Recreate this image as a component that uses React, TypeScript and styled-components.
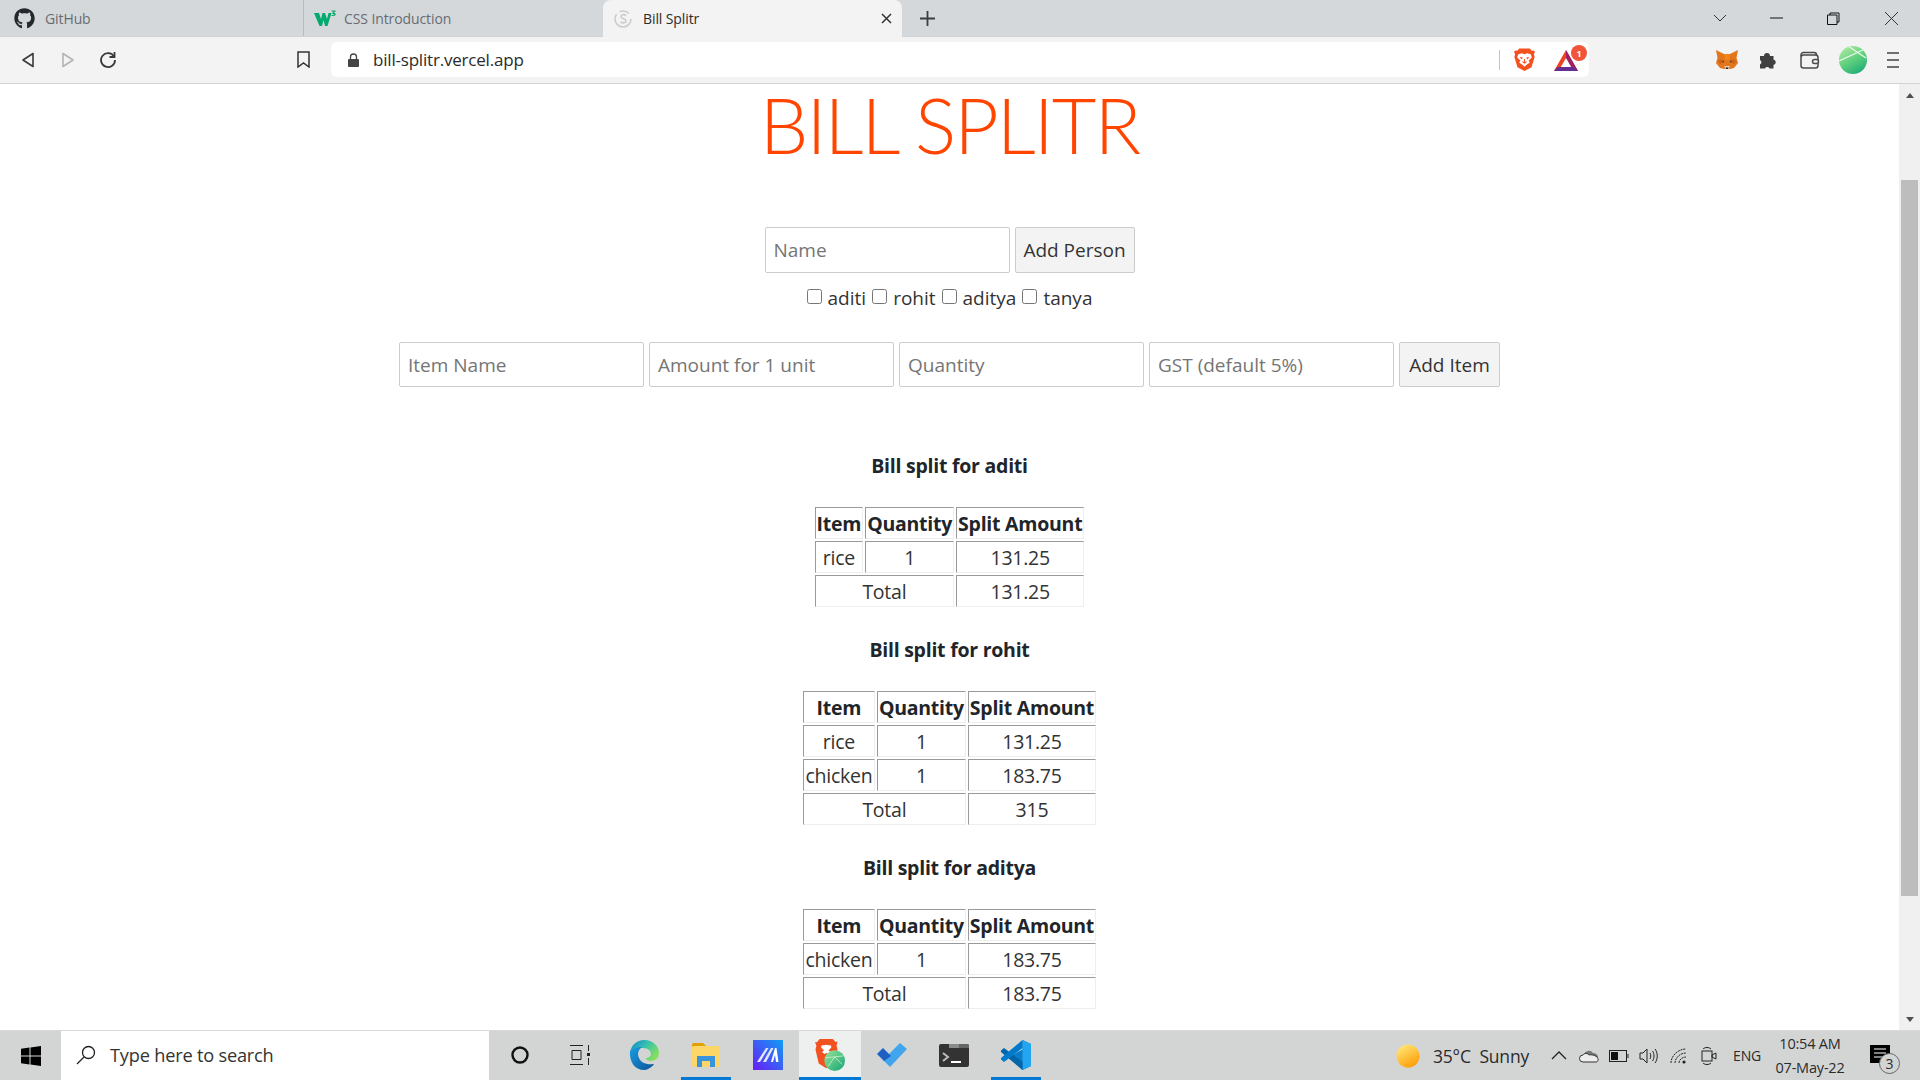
import React from 'react';
import styled, { createGlobalStyle } from 'styled-components';
import { FaGithub } from 'react-icons/fa';

const GlobalStyle = createGlobalStyle`
  html, body { margin: 0; padding: 0; height: 100%; overflow: hidden; background: #fff; }
  body { font-family: 'Open Sans', 'Liberation Sans', sans-serif; color: #212529; }
  #root { height: 100%; }
`;

const Screen = styled.div`
  width: 1920px;
  height: 1080px;
  display: flex;
  flex-direction: column;
  overflow: hidden;
`;

/* ---- tab strip ---- */
const TabStrip = styled.div`
  height: 36px;
  flex: none;
  display: flex;
  align-items: stretch;
  background: #d5d8db;
  border-bottom: 1px solid #cfd2d5;
  box-sizing: content-box;
`;

const Tab = styled.div<{ $active?: boolean; $width: number; $divider?: boolean; $inset: number; $gap: number }>`
  width: ${p => p.$width}px;
  flex: none;
  box-sizing: border-box;
  display: flex;
  align-items: center;
  gap: ${p => p.$gap}px;
  padding: 0 10px 0 ${p => p.$inset}px;
  font-size: 14px;
  letter-spacing: -0.1px;
  color: ${p => (p.$active ? '#2a2c2e' : '#686c70')};
  background: ${p => (p.$active ? '#f3f3f3' : 'transparent')};
  border-radius: ${p => (p.$active ? '8px 8px 0 0' : '0')};
  border-right: ${p => (p.$divider ? '1px solid #b9bcbf' : '0')};
  margin-bottom: ${p => (p.$active ? '-1px' : '0')};
`;

const TabTitle = styled.span`
  flex: 1;
  white-space: nowrap;
`;

const NewTab = styled.div`
  width: 50px;
  display: flex;
  align-items: center;
  justify-content: center;
`;

const WindowControls = styled.div`
  margin-left: auto;
  display: flex;
  align-items: center;
`;

const WindowButton = styled.div<{ $width?: number }>`
  width: ${p => p.$width ?? 57}px;
  height: 36px;
  display: flex;
  align-items: center;
  justify-content: center;
`;

/* ---- address toolbar ---- */
const Toolbar = styled.div`
  height: 47px;
  flex: none;
  box-sizing: border-box;
  display: flex;
  align-items: center;
  padding-left: 8px;
  padding-bottom: 1px;
  background: #f3f3f3;
  border-bottom: 1px solid #d4d4d4;
`;

const ToolSlot = styled.div<{ $width?: number; $offset?: number }>`
  width: ${p => p.$width ?? 40}px;
  margin-left: ${p => p.$offset ?? 0}px;
  height: 35px;
  flex: none;
  display: flex;
  align-items: center;
  justify-content: center;
`;

const AddressBar = styled.div`
  width: 1258px;
  height: 35px;
  flex: none;
  margin-left: 8px;
  background: #fff;
  border-radius: 6px;
  display: flex;
  align-items: center;
  padding-left: 17px;
  box-sizing: border-box;
`;

const Url = styled.span`
  margin-left: 14px;
  font-size: 17px;
  letter-spacing: -0.2px;
  color: #2b2b2b;
`;

const AddressEnd = styled.div`
  margin-left: auto;
  display: flex;
  align-items: center;
  height: 100%;
`;

const AddressDivider = styled.div`
  width: 1px;
  height: 20px;
  background: #c4c4c4;
  margin-right: 14px;
`;

const BatWrap = styled.div`
  position: relative;
  width: 24px;
  height: 21px;
  margin: 2px 11px 0 19px;
`;

const BatBadge = styled.div`
  position: absolute;
  top: -5px;
  right: -9px;
  width: 16px;
  height: 16px;
  border-radius: 50%;
  background: #f0553a;
  color: #fff;
  font-size: 9px;
  font-weight: 700;
  display: flex;
  align-items: center;
  justify-content: center;
`;

const Avatar = styled.div`
  width: 28px;
  height: 28px;
  border-radius: 50%;
  background: linear-gradient(150deg, #a8e8a0 10%, #5fcf7d 50%, #16a877 95%);
  overflow: hidden;
`;

/* ---- page ---- */
const Viewport = styled.div`
  flex: 1;
  min-height: 0;
  display: flex;
`;

const Page = styled.main`
  flex: 1;
  min-width: 0;
  display: flex;
  flex-direction: column;
  align-items: center;
  background: #fff;
`;

const Title = styled.h1`
  margin: 0;
  height: 143px;
  flex: none;
  font-family: Lato, 'Open Sans', sans-serif;
  font-size: 77px;
  font-weight: 300;
  line-height: 80px;
  letter-spacing: -2px;
  color: #ff4500;
  white-space: nowrap;
`;

const FormRow = styled.div<{ $height: number }>`
  display: flex;
  gap: 5px;
  height: ${p => p.$height}px;
  flex: none;
`;

const Field = styled.input`
  width: 245px;
  height: 100%;
  box-sizing: border-box;
  padding: 0 8px;
  border: 1px solid #ccc;
  border-radius: 2px;
  background: #fff;
  font: 400 19px 'Open Sans', sans-serif;
  color: #333;
  &::placeholder { color: #757575; opacity: 1; }
`;

const ActionButton = styled.button<{ $width: number }>`
  width: ${p => p.$width}px;
  height: 100%;
  box-sizing: border-box;
  padding: 0;
  border: 1px solid #ccc;
  border-radius: 2px;
  background: #f3f3f3;
  font: 400 19px 'Open Sans', sans-serif;
  color: #333;
  white-space: nowrap;
`;

const PeopleRow = styled.div`
  height: 69px;
  flex: none;
  box-sizing: border-box;
  padding-top: 11px;
  display: flex;
  align-items: flex-start;
  font-size: 19px;
  color: #333;
  line-height: 28px;
`;

const Person = styled.label`
  display: inline-flex;
  align-items: center;
  margin-right: 6px;
  &:last-child { margin-right: 0; }
  input {
    width: 15px;
    height: 15px;
    margin: 0 6px 3px 0;
  }
`;

const Splits = styled.section`
  margin-top: 65px;
  flex: none;
  display: flex;
  flex-direction: column;
  align-items: center;
`;

const SplitHeading = styled.h3`
  margin: 0;
  height: 55px;
  font-size: 19.5px;
  font-weight: 700;
  line-height: 28px;
  letter-spacing: -0.25px;
  color: #212529;
`;

const SplitTable = styled.table`
  border-collapse: separate;
  border-spacing: 2px;
  margin: -2px 0 27px;
  font-size: 19.5px;
  letter-spacing: -0.25px;
  color: #333;
  text-align: center;
`;

const HeadCell = styled.th<{ $minWidth?: number }>`
  height: 32px;
  box-sizing: border-box;
  min-width: ${p => p.$minWidth ?? 0}px;
  padding: 0 1px;
  font-weight: 700;
  color: #212529;
  white-space: nowrap;
  border: 1px solid;
  border-color: #9a9a9a #eee #eee #9a9a9a;
`;

const Cell = styled.td`
  height: 32px;
  box-sizing: border-box;
  padding: 0 1px;
  white-space: nowrap;
  border: 1px solid;
  border-color: #9a9a9a #eee #eee #9a9a9a;
`;

const ScrollTrack = styled.div`
  width: 21px;
  flex: none;
  background: #f0f0f0;
  display: flex;
  flex-direction: column;
  align-items: center;
`;

const ScrollArrow = styled.div<{ $down?: boolean }>`
  height: 22px;
  flex: none;
  display: flex;
  align-items: center;
  justify-content: center;
  &::before {
    content: '';
    border-left: 4.5px solid transparent;
    border-right: 4.5px solid transparent;
    ${p => (p.$down ? 'border-top: 5px solid #505050;' : 'border-bottom: 5px solid #505050;')}
  }
`;

const ScrollGap = styled.div<{ $height?: number }>`
  ${p => (p.$height ? `height: ${p.$height}px; flex: none;` : 'flex: 1;')}
`;

const ScrollThumb = styled.div`
  width: 17px;
  height: 716px;
  flex: none;
  background: #bdbdbd;
`;

/* ---- taskbar ---- */
const Taskbar = styled.footer`
  height: 50px;
  flex: none;
  display: flex;
  align-items: stretch;
  background: #d3d5d5;
  border-top: 1px solid #d9d9d9;
  box-sizing: border-box;
`;

const StartButton = styled.div`
  width: 61px;
  flex: none;
  display: flex;
  align-items: center;
  justify-content: center;
`;

const SearchBox = styled.div`
  width: 428px;
  flex: none;
  background: #fff;
  display: flex;
  align-items: center;
  padding: 0 0 2px 15px;
  box-sizing: border-box;
  gap: 14px;
  font-size: 18.2px;
  letter-spacing: -0.2px;
  color: #333;
`;

const TaskSlot = styled.div<{ $active?: boolean; $running?: boolean }>`
  position: relative;
  width: 62px;
  flex: none;
  display: flex;
  align-items: center;
  justify-content: center;
  padding-bottom: 1px;
  box-sizing: border-box;
  background: ${p => (p.$active ? '#eef0f0' : 'transparent')};
  &::after {
    content: '';
    display: ${p => (p.$running ? 'block' : 'none')};
    position: absolute;
    left: ${p => (p.$active ? 0 : 6)}px;
    right: ${p => (p.$active ? 0 : 6)}px;
    bottom: 0;
    height: 3px;
    background: #0078d4;
  }
`;

const Tray = styled.div`
  margin-left: auto;
  display: flex;
  align-items: stretch;
  padding-right: 10px;
  color: #2b2b2b;
`;

const TraySlot = styled.div<{ $width?: number }>`
  width: ${p => p.$width ?? 30}px;
  flex: none;
  display: flex;
  align-items: center;
  justify-content: center;
`;

const Weather = styled.span`
  width: 120px;
  flex: none;
  padding-left: 9px;
  box-sizing: border-box;
  align-self: center;
  font-size: 17.5px;
  letter-spacing: -0.2px;
  white-space: pre;
`;

const LangLabel = styled(TraySlot)`
  font-size: 14px;
  letter-spacing: -0.2px;
`;

const Clock = styled(TraySlot)`
  flex-direction: column;
  font-size: 14.5px;
  line-height: 24px;
  letter-spacing: -0.2px;
`;

const NoticeCount = styled.span`
  position: absolute;
  right: -10px;
  bottom: -11px;
  width: 21px;
  height: 21px;
  box-sizing: border-box;
  border-radius: 50%;
  border: 1px solid #666;
  background: #d3d5d5;
  font-size: 14px;
  display: flex;
  align-items: center;
  justify-content: center;
`;

const Notice = styled.div`
  position: relative;
  width: 20px;
  height: 18px;
  margin-top: -4px;
`;

/* ---- drawings ---- */
const W3Icon = () => (
  <svg width="22" height="17" viewBox="0 0 22 17" fill="#04aa6d">
    <path d="M0 3h5l2 6 1.500-6h2.500l2 6 1.500-6h3L13.500 16H11L9.500 10 8 16H5.500z" />
    <path d="M17.500 .5h4v1l-1.800 1.600c1.400 0 2.100.6 2.100 1.500S20.500 6 19 6h-1.500V5H19c.6 0 1-.2 1-.5s-.5-.6-1-.6h-.7V3l1.300-1.500h-2.100z" />
  </svg>
);

const SplitrIcon = () => (
  <svg width="20" height="20" viewBox="0 0 20 20" fill="none" stroke="#c9cbcd" strokeWidth="1.600">
    <circle cx="10" cy="10" r="8" strokeDasharray="30 4 10 6" />
    <path d="M13 6.500c-2-1.500-5-1-5 1 0 2.500 5 2 5 4.500 0 2-3 2.500-5.500 1" />
  </svg>
);

const BraveIcon = () => (
  <svg width="21" height="23" viewBox="0 0 20 22">
    <path d="M5 .5h10l2 2.200 1.700-.3L20 3.500l-1 2.500.7 2.500-3 10L10 22 3.300 18.500l-3-10L1 6 0 3.500l1.300-1.100L3 2.700z" fill="#f4511e" />
    <path d="M4 6l3.500-1L10 6l2.500-1L16 6l1 3-3 3 1 2-3 2-2 2-2-2-3-2 1-2-3-3z" fill="#fff" />
    <path d="M5.500 8.300l3 1-1.500 1.700zM14.500 8.300l-3 1 1.500 1.700z" fill="#f4511e" />
    <path d="M10 10.500v4M8 13l2 1.500 2-1.500" fill="none" stroke="#f4511e" strokeWidth="1" />
  </svg>
);

const BatIcon = () => (
  <svg width="24" height="21" viewBox="0 0 24 21">
    <path d="M12 0l12 21H0z" fill="#f1421f" />
    <path d="M12 0l12 21h-6L12 10z" fill="#9e1f63" />
    <path d="M0 21l3.500-4h17l3.500 4z" fill="#662d91" />
    <path d="M12 8l5.200 9H6.800z" fill="#fff" />
  </svg>
);

const FoxIcon = () => (
  <svg width="22" height="21" viewBox="0 0 22 21">
    <path d="M0 1l8 4h6l8-4-1.500 8L22 14l-4 5-4 1h-6l-4-1-4-5 1.500-5z" fill="#e2761b" />
    <path d="M8 5h6l-1 6H9z" fill="#f6851b" />
    <path d="M2 11l5-.5 1 2.500-4 2zM20 11l-5-.5-1 2.500 4 2z" fill="#cd6116" />
    <path d="M6 12.500l2-.5v1.500zM16 12.500l-2-.5v1.500z" fill="#233447" />
    <path d="M8 17h6l-1.500 3h-3z" fill="#e4cfc2" />
    <path d="M9.500 18.500h3L11.700 20h-1.400z" fill="#161616" />
  </svg>
);

const PuzzleIcon = () => (
  <svg width="18" height="18" viewBox="0 0 18 18" fill="#404040">
    <path d="M1 5h4a3 3 0 0 1 6 0h3.500v3.500a2.800 2.800 0 0 1 0 5.500V17.500H10.500a2.500 2.500 0 0 0-4.500 0H1v-4a2.500 2.500 0 0 0 0-4.500z" />
  </svg>
);

const WalletIcon = () => (
  <svg width="20" height="18" viewBox="0 0 20 18" fill="none" stroke="#4a4a4a" strokeWidth="1.500">
    <path d="M1 5.500V4a2.500 2.500 0 0 1 2.500-2.500H14A2.500 2.500 0 0 1 16.500 4v1" />
    <rect x="1" y="4" width="17" height="13" rx="2.500" />
    <rect x="12.500" y="8.500" width="6" height="4" rx="2" fill="#f3f3f3" />
  </svg>
);

const MenuIcon = () => (
  <svg width="12" height="16" viewBox="0 0 12 16" stroke="#444" strokeWidth="1.500">
    <path d="M0 1h12M0 8h12M0 15h12" />
  </svg>
);

const WinLogo = () => (
  <svg width="20" height="20" viewBox="0 0 20 20" fill="#000">
    <path d="M0 2.800L8.500 1.600v8H0zM9.500 1.500L20 0v9.600H9.500zM0 10.500h8.500v8L0 17.300zM9.500 10.500H20V20L9.500 18.600z" />
  </svg>
);

const EdgeIcon = () => (
  <svg width="30" height="30" viewBox="0 0 30 30">
    <defs>
      <linearGradient id="edgeTop" x1="0" y1="0" x2="1" y2="0.600">
        <stop offset="0" stopColor="#0c82c9" />
        <stop offset="0.5" stopColor="#35c1b0" />
        <stop offset="1" stopColor="#86e05c" />
      </linearGradient>
      <linearGradient id="edgeLow" x1="0" y1="0" x2="1" y2="1">
        <stop offset="0" stopColor="#1b9de2" />
        <stop offset="1" stopColor="#0a5498" />
      </linearGradient>
    </defs>
    <path d="M1 13C2 5 8 0 15 0c9 0 15 6 15 13 0 5-4 8-8 8-3 0-5-1-5-3 3 0 5-2 5-4 0-3-3-6-8-6-6 0-11 2-13 5z" fill="url(#edgeTop)" />
    <path d="M1 11C4 8 8 7 13 7c-4 3-5 7-3 11 2 5 8 7 14 6l1 .5C22 28 18 30 15 30 6 30 0 22 1 11z" fill="url(#edgeLow)" />
  </svg>
);

const FolderIcon = () => (
  <svg width="28" height="24" viewBox="0 0 28 24">
    <path d="M0 2a2 2 0 0 1 2-2h9l3 3v3H0z" fill="#e0a000" />
    <rect y="3" width="28" height="21" rx="1.500" fill="#fcd768" />
    <path d="M5 24V13h18v11h-5v-6h-8v6z" fill="#3a94dc" />
  </svg>
);

const MarkIcon = () => (
  <svg width="30" height="30" viewBox="0 0 30 30">
    <defs>
      <linearGradient id="markBg" x1="0" y1="1" x2="1" y2="0">
        <stop offset="0" stopColor="#6a1cf5" />
        <stop offset="1" stopColor="#0f9df5" />
      </linearGradient>
    </defs>
    <rect width="30" height="30" fill="url(#markBg)" />
    <path d="M4 22L13 8h2.500L7 22zM10 22l8-14h2.500L13 22z" fill="#dfe6ff" />
    <path d="M18 22l4-14h1.500l2 14h-2.500l-1-7-2 7z" fill="#fff" />
  </svg>
);

const BraveProfileIcon = () => (
  <svg width="30" height="32" viewBox="0 0 32 34">
    <defs>
      <linearGradient id="braveBall" x1="0" y1="0" x2="1" y2="1">
        <stop offset="0" stopColor="#9be49b" />
        <stop offset="1" stopColor="#12a574" />
      </linearGradient>
    </defs>
    <path d="M5 0h14l3 3 2-.5-1 4.500 1 4-4 14-8 6-8-5-3.500-15 1-4L0 3l2 .5z" fill="#f1521f" />
    <path d="M12 6c-1.500.8-3.500.2-5 .8L6.500 9l3 3-2 2 3 2 1.500-1.500 1.500 1.500 3-2-2-2 3-3-.5-2.200c-1.500-.6-3.500 0-5-.8z" fill="#fff" />
    <circle cx="21" cy="23" r="11" fill="url(#braveBall)" />
    <path d="M11 20l19-2M14 29l7-10 8 8" stroke="#d8f3d8" strokeWidth="0.800" fill="none" />
  </svg>
);

const TodoIcon = () => (
  <svg width="30" height="24" viewBox="0 0 30 24">
    <path d="M23 0l7 6-17 18-7-7z" fill="#41a5ee" />
    <path d="M0 11l6-6 8 8-7 5z" fill="#1e5fc4" />
  </svg>
);

const TerminalIcon = () => (
  <svg width="30" height="23" viewBox="0 0 30 23">
    <path d="M2 0h26a2 2 0 0 1 2 2v19a2 2 0 0 1-2 2H2a2 2 0 0 1-2-2V2a2 2 0 0 1 2-2z" fill="#333" />
    <path d="M10 0h10v4H10z" fill="#8a8a8a" />
    <path d="M20 0h8a2 2 0 0 1 2 2v2H20z" fill="#666" />
    <path d="M4 9l5 4-5 4" stroke="#bbb" strokeWidth="2" fill="none" />
    <path d="M12 18h10" stroke="#fff" strokeWidth="2" />
  </svg>
);

const CodeIcon = () => (
  <svg width="30" height="30" viewBox="0 0 30 30">
    <path d="M21.500 0L30 4v22l-8.500 4L8 17l13.500-7.500z" fill="#0a7cc8" />
    <path d="M21.500 0L30 4v22l-8.500 4z" fill="#23a6ef" />
    <path d="M0 10.500L3 8l18.500 14v8L0 12z" fill="#0065a9" />
    <path d="M0 19.500L3 22 21.500 8V0L0 18z" fill="#007acc" />
  </svg>
);

const SunIcon = () => (
  <svg width="24" height="24" viewBox="0 0 24 24">
    <defs>
      <linearGradient id="sunFill" x1="0.200" y1="0" x2="0.800" y2="1">
        <stop offset="0" stopColor="#ffe97a" />
        <stop offset="1" stopColor="#ff9800" />
      </linearGradient>
    </defs>
    <circle cx="12" cy="12" r="11.500" fill="url(#sunFill)" />
  </svg>
);

const line = { fill: 'none', stroke: '#222', strokeWidth: 1 } as const;

const TrayIcon = ({ kind }: { kind: string }) => {
  switch (kind) {
    case 'chevron':
      return <svg width="16" height="9" viewBox="0 0 16 9"><path d="M1 8l7-7 7 7" {...line} strokeWidth={1.300} /></svg>;
    case 'cloud':
      return (
        <svg width="20" height="14" viewBox="0 0 20 14">
          <path d="M5 6a5 5 0 0 1 9-2c3 0 5 2 5 4H4z" fill="#777" />
          <path d="M4 13a3.500 3.500 0 0 1 0-7c1-2 5-2 6 0 1-.5 5-.5 8 2 2 2 1 5-1 5z" fill="#eee" stroke="#333" />
        </svg>
      );
    case 'battery':
      return (
        <svg width="20" height="12" viewBox="0 0 20 12">
          <rect x=".5" y=".5" width="17" height="11" {...line} />
          <rect x="2" y="2" width="7" height="8" fill="#111" />
          <path d="M19 4v4" {...line} />
        </svg>
      );
    case 'speaker':
      return (
        <svg width="20" height="16" viewBox="0 0 20 16">
          <path d="M1 5h3l4-4v14l-4-4H1z" {...line} />
          <path d="M11 5c1 2 1 4 0 6M13.500 3c2 3 2 7 0 10M16 1c3 4 3 10 0 14" {...line} />
        </svg>
      );
    case 'wifi':
      return (
        <svg width="18" height="16" viewBox="0 0 18 16">
          <path d="M1 15C1 8 8 1 16 1M5 15c0-5 5-10 11-10M9 15c0-3 3-6 7-6" {...line} strokeDasharray="2 0.800" />
          <circle cx="14" cy="14" r="1.600" fill="#222" />
        </svg>
      );
    default:
      return (
        <svg width="16" height="20" viewBox="0 0 16 20">
          <rect x="1" y="5" width="10" height="10" {...line} />
          <path d="M11 9l4-2v6l-4-2zM2 3c2-2 6-2 8 0M2 17c2 2 6 2 8 0" {...line} />
        </svg>
      );
  }
};

type Row = { item: string; qty: number; amount: string };
type Split = { name: string; rows: Row[]; total: string; itemWidth: number };

const splits: Split[] = [
  { name: 'aditi', rows: [{ item: 'rice', qty: 1, amount: '131.25' }], total: '131.25', itemWidth: 48 },
  {
    name: 'rohit',
    rows: [
      { item: 'rice', qty: 1, amount: '131.25' },
      { item: 'chicken', qty: 1, amount: '183.75' },
    ],
    total: '315',
    itemWidth: 72,
  },
  { name: 'aditya', rows: [{ item: 'chicken', qty: 1, amount: '183.75' }], total: '183.75', itemWidth: 72 },
];

const people = ['aditi', 'rohit', 'aditya', 'tanya'];
const itemFields = ['Item Name', 'Amount for 1 unit', 'Quantity', 'GST (default 5%)'];

const App = () => (
  <Screen>
    <GlobalStyle />
    <TabStrip>
      <Tab $width={304} $divider $inset={14} $gap={10}>
        <FaGithub size={21} color="#24292e" />
        <TabTitle>GitHub</TabTitle>
      </Tab>
      <Tab $width={299} $inset={10} $gap={8}>
        <W3Icon />
        <TabTitle>CSS Introduction</TabTitle>
      </Tab>
      <Tab $width={299} $active $inset={10} $gap={10}>
        <SplitrIcon />
        <TabTitle>Bill Splitr</TabTitle>
        <svg width="11" height="11" viewBox="0 0 11 11" stroke="#333" strokeWidth="1.500"><path d="M1 1l9 9M10 1l-9 9" /></svg>
      </Tab>
      <NewTab>
        <svg width="15" height="15" viewBox="0 0 15 15" stroke="#3c3c3c" strokeWidth="1.800"><path d="M7.500 0v15M0 7.500h15" /></svg>
      </NewTab>
      <WindowControls>
        <WindowButton>
          <svg width="14" height="8" viewBox="0 0 14 8" fill="none" stroke="#333"><path d="M1 1l6 6 6-6" /></svg>
        </WindowButton>
        <WindowButton>
          <svg width="13" height="2" viewBox="0 0 13 2" stroke="#111"><path d="M0 1h13" /></svg>
        </WindowButton>
        <WindowButton>
          <svg width="13" height="13" viewBox="0 0 13 13" fill="none" stroke="#111"><path d="M3 3V1h9v9h-2M.5 3h9.500v9.500H.5z" /></svg>
        </WindowButton>
        <WindowButton $width={58}>
          <svg width="13" height="13" viewBox="0 0 13 13" stroke="#333"><path d="M0 0l13 13M13 0L0 13" /></svg>
        </WindowButton>
      </WindowControls>
    </TabStrip>

    <Toolbar>
      <ToolSlot>
        <svg width="14" height="16" viewBox="0 0 14 16" fill="none" stroke="#3a3a3a" strokeWidth="1.600" strokeLinejoin="round"><path d="M12 1.500L2 8l10 6.500z" /></svg>
      </ToolSlot>
      <ToolSlot>
        <svg width="14" height="16" viewBox="0 0 14 16" fill="none" stroke="#b4b4b4" strokeWidth="1.600" strokeLinejoin="round"><path d="M2 1.500L12 8 2 14.500z" /></svg>
      </ToolSlot>
      <ToolSlot>
        <svg width="18" height="18" viewBox="0 0 18 18" fill="none" stroke="#3a3a3a" strokeWidth="1.800"><path d="M15 5.500A7 7 0 1 0 16 9" /><path d="M15.500 1v5h-5" /></svg>
      </ToolSlot>
      <ToolSlot $offset={155}>
        <svg width="13" height="17" viewBox="0 0 13 17" fill="none" stroke="#333" strokeWidth="1.500"><path d="M1 1h11v15l-5.500-4L1 16z" /></svg>
      </ToolSlot>
      <AddressBar>
        <svg width="11" height="14" viewBox="0 0 11 14"><path d="M2.500 6V4a3 3 0 0 1 6 0v2" fill="none" stroke="#444" strokeWidth="1.300" /><rect y="6" width="11" height="8" rx="1" fill="#444" /></svg>
        <Url>bill-splitr.vercel.app</Url>
        <AddressEnd>
          <AddressDivider />
          <BraveIcon />
          <BatWrap>
            <BatIcon />
            <BatBadge>1</BatBadge>
          </BatWrap>
        </AddressEnd>
      </AddressBar>
      <ToolSlot $offset={117} $width={42}><FoxIcon /></ToolSlot>
      <ToolSlot $width={40}><PuzzleIcon /></ToolSlot>
      <ToolSlot $width={44}><WalletIcon /></ToolSlot>
      <ToolSlot $width={42}>
        <Avatar>
          <svg width="28" height="28" viewBox="0 0 28 28" fill="none" stroke="#e6f7e6" strokeWidth="1.300"><path d="M0 15L26 3M9 0l18 12" /></svg>
        </Avatar>
      </ToolSlot>
      <ToolSlot $width={38}><MenuIcon /></ToolSlot>
    </Toolbar>

    <Viewport>
      <Page>
        <Title>BILL SPLITR</Title>
        <FormRow $height={46}>
          <Field placeholder="Name" />
          <ActionButton $width={120}>Add Person</ActionButton>
        </FormRow>
        <PeopleRow>
          {people.map(name => (
            <Person key={name}>
              <input type="checkbox" />
              {name}
            </Person>
          ))}
        </PeopleRow>
        <FormRow $height={45}>
          {itemFields.map(label => (
            <Field key={label} placeholder={label} />
          ))}
          <ActionButton $width={101}>Add Item</ActionButton>
        </FormRow>
        <Splits>
          {splits.map(split => (
            <React.Fragment key={split.name}>
              <SplitHeading>Bill split for {split.name}</SplitHeading>
              <SplitTable>
                <thead>
                  <tr>
                    <HeadCell $minWidth={split.itemWidth}>Item</HeadCell>
                    <HeadCell>Quantity</HeadCell>
                    <HeadCell>Split Amount</HeadCell>
                  </tr>
                </thead>
                <tbody>
                  {split.rows.map(row => (
                    <tr key={row.item}>
                      <Cell>{row.item}</Cell>
                      <Cell>{row.qty}</Cell>
                      <Cell>{row.amount}</Cell>
                    </tr>
                  ))}
                  <tr>
                    <Cell colSpan={2}>Total</Cell>
                    <Cell>{split.total}</Cell>
                  </tr>
                </tbody>
              </SplitTable>
            </React.Fragment>
          ))}
        </Splits>
      </Page>
      <ScrollTrack>
        <ScrollArrow />
        <ScrollGap $height={74} />
        <ScrollThumb />
        <ScrollGap />
        <ScrollArrow $down />
      </ScrollTrack>
    </Viewport>

    <Taskbar>
      <StartButton><WinLogo /></StartButton>
      <SearchBox>
        <svg width="20" height="20" viewBox="0 0 20 20" fill="none" stroke="#222" strokeWidth="1.300"><circle cx="12.500" cy="7.500" r="6" /><path d="M8 12l-7 7" /></svg>
        Type here to search
      </SearchBox>
      <TaskSlot>
        <svg width="18" height="18" viewBox="0 0 18 18" fill="none" stroke="#111" strokeWidth="2.400"><circle cx="9" cy="9" r="7.500" /></svg>
      </TaskSlot>
      <TaskSlot>
        <svg width="20" height="20" viewBox="0 0 20 20" fill="none" stroke="#222" style={{ marginRight: 4 }}><path d="M0 .5h13M0 19.500h13M2 5.500h9v9H2zM18.500 0v6M18.500 13v7" /><rect x="17" y="8" width="3" height="3" fill="#222" stroke="none" /></svg>
      </TaskSlot>
      <TaskSlot><EdgeIcon /></TaskSlot>
      <TaskSlot $running><FolderIcon /></TaskSlot>
      <TaskSlot><MarkIcon /></TaskSlot>
      <TaskSlot $active $running><BraveProfileIcon /></TaskSlot>
      <TaskSlot><TodoIcon /></TaskSlot>
      <TaskSlot><TerminalIcon /></TaskSlot>
      <TaskSlot $running><CodeIcon /></TaskSlot>
      <Tray>
        <TraySlot $width={32}><SunIcon /></TraySlot>
        <Weather>35°C  Sunny</Weather>
        {['chevron', 'cloud', 'battery', 'speaker', 'wifi', 'meet'].map(kind => (
          <TraySlot key={kind}><TrayIcon kind={kind} /></TraySlot>
        ))}
        <LangLabel $width={46}>ENG</LangLabel>
        <Clock $width={80}>
          <span>10:54 AM</span>
          <span>07-May-22</span>
        </Clock>
        <TraySlot $width={60}>
          <Notice>
            <svg width="20" height="18" viewBox="0 0 20 18"><rect width="20" height="18" fill="#000" /><path d="M4 4h12M4 8h12M4 12h12" stroke="#fff" strokeWidth="1.200" /></svg>
            <NoticeCount>3</NoticeCount>
          </Notice>
        </TraySlot>
      </Tray>
    </Taskbar>
  </Screen>
);

export default App;
